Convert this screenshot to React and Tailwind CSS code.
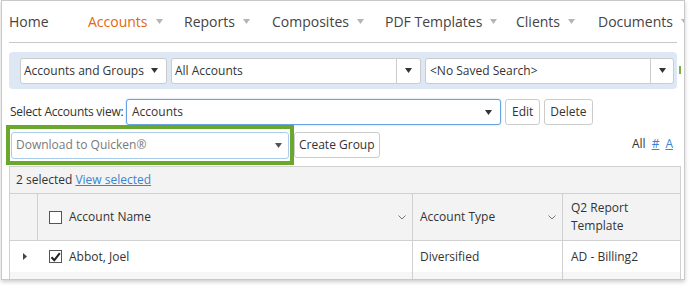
import React from 'react';

const Caret = ({ className = '' }) => (
  <svg width="7" height="5" viewBox="0 0 7 5" className={className}>
    <path d="M0 0h7L3.5 5z" fill="currentColor" />
  </svg>
);

const navItems = [
  { label: 'Home', w: 'w-[79px]' },
  { label: 'Accounts', w: 'w-[96px]', active: true, caret: true },
  { label: 'Reports', w: 'w-[88px]', caret: true },
  { label: 'Composites', w: 'w-[113px]', caret: true },
  { label: 'PDF Templates', w: 'w-[131px]', caret: true },
  { label: 'Clients', w: 'w-[82px]', caret: true },
  { label: 'Documents', w: 'w-[90px]', caret: true },
];

const Check = ({ checked }) => (
  <span className="w-[13px] h-[13px] border border-[#555] bg-white flex items-center justify-center shrink-0">
    {checked && (
      <svg width="11" height="10" viewBox="0 0 11 10">
        <path d="M1.5 5.2l2.8 3L9.8 1.2" stroke="#222" strokeWidth="2" fill="none" />
      </svg>
    )}
  </span>
);

const Chevron = () => (
  <svg width="8" height="5" viewBox="0 0 8 5" className="text-[#777]">
    <path d="M0.5 0.5l3.5 3.5 3.5-3.5" stroke="currentColor" fill="none" />
  </svg>
);

export default function App() {
  return (
    <div className="w-[693px] h-[289px] bg-white overflow-hidden text-[#333] font-['Open_Sans',sans-serif] whitespace-nowrap">
      <div className="ml-px w-[684px] h-[280px] border-x border-t border-b border-[#c9c9c9] shadow-[0_2px_4px_rgba(0,0,0,0.2)] overflow-hidden px-[7px]">
        {/* top nav */}
        <nav className="h-[42px] border-b border-[#c8c8c8] flex items-center text-[14px] pb-px">
          {navItems.map(n => (
            <div key={n.label} className={`${n.w} shrink-0 flex items-center gap-[8px]`}>
              <span className={n.active ? 'text-[#e2680c]' : 'text-[#444]'}>{n.label}</span>
              {n.caret && <Caret className="text-[#b5b5b5] mt-px" />}
            </div>
          ))}
        </nav>

        {/* search band */}
        <div className="mt-[9px] h-[37px] bg-[#dde8f4] rounded-[4px] flex items-center pl-[11px] gap-[4px] text-[12px] relative">
          <div className="w-[147px] h-[26px] bg-white border border-[#ccc] rounded-[3px] flex items-center pl-[3px] pr-[4px] justify-between">
            <span>Accounts and Groups</span>
            <Caret className="text-[#333] mr-[4px]" />
          </div>
          <div className="w-[250px] h-[26px] bg-white border border-[#ccc] rounded-[3px] flex items-center">
            <span className="flex-1 px-[3px]">All Accounts</span>
            <span className="w-[24px] h-full border-l border-[#ccc] flex items-center justify-center"><Caret className="text-[#333]" /></span>
          </div>
          <div className="w-[249px] h-[26px] bg-white border border-[#ccc] rounded-[3px] flex items-center">
            <span className="flex-1 px-[4px]">&lt;No Saved Search&gt;</span>
            <span className="w-[23px] h-full border-l border-[#ccc] flex items-center justify-center"><Caret className="text-[#333]" /></span>
          </div>
          <span className="absolute left-[670px] top-[14px] w-[2px] h-[8px] bg-[#7ab040]" />
        </div>

        {/* view row */}
        <div className="mt-[10px] flex items-center text-[12px] h-[26px]">
          <span className="w-[117px] shrink-0 pl-px tracking-[-0.25px]">Select Accounts view:</span>
          <div className="w-[375px] h-[26px] bg-white border border-[#66a3e0] rounded-[3px] flex items-center justify-between pl-[5px] pr-[8px] shadow-[0_0_2px_rgba(80,150,230,0.5)]">
            <span>Accounts</span>
            <Caret className="text-[#333]" />
          </div>
          <button className="ml-[4px] h-[26px] px-[6px] border border-[#ccc] rounded-[3px] bg-white">Edit</button>
          <button className="ml-[4px] h-[26px] px-[5px] border border-[#ccc] rounded-[3px] bg-white">Delete</button>
        </div>

        {/* action row */}
        <div className="flex items-center h-[40px] text-[12px] -ml-[3px]">
          <div className="w-[288px] h-[40px] border-[4px] border-[#69a82c] flex items-center px-px">
            <div className="w-full h-[27px] border border-[#a9cbec] rounded-[3px] bg-white flex items-center justify-between pl-[4px] pr-[6px]">
              <span className="text-[#7a7a7a]">Download to Quicken®</span>
              <Caret className="text-[#555]" />
            </div>
          </div>
          <button className="h-[26px] px-[4px] border border-[#ccc] rounded-[3px] bg-white">Create Group</button>
          <div className="ml-auto mr-[4px] flex items-center gap-[6px] mt-[-2px]">
            <span>All</span>
            <span className="text-[#3b84d0] underline">#</span>
            <span className="text-[#3b84d0] underline">A</span>
          </div>
        </div>

        {/* grid */}
        <div className="mt-px w-[672px] border-l border-r border-t border-[#d0d0d0] text-[12px] bg-[#f3f3f3]">
          <div className="h-[26px] flex items-center pl-[6px]">
            <span>2 selected&nbsp;</span>
            <span className="text-[#3b84d0] underline">View selected</span>
          </div>
          <div className="h-[48px] flex border-t border-b border-[#d0d0d0]">
            <div className="w-[28px] border-r border-[#d0d0d0]" />
            <div className="w-[375px] border-r border-[#d0d0d0] flex items-center pl-[11px] pr-[6px]">
              <Check />
              <span className="ml-[7px] flex-1">Account Name</span>
              <Chevron />
            </div>
            <div className="w-[150px] border-r border-[#d0d0d0] flex items-center pl-[7px] pr-[6px]">
              <span className="flex-1">Account Type</span>
              <Chevron />
            </div>
            <div className="flex-1 flex items-center pl-[8px] leading-[18px]">
              <span>Q2 Report<br />Template</span>
            </div>
          </div>
          <div className="h-[31px] flex bg-white">
            <div className="w-[28px] flex items-center justify-center pl-[2px]">
              <svg width="4" height="7" viewBox="0 0 4 7"><path d="M0 0l4 3.5L0 7z" fill="#444" /></svg>
            </div>
            <div className="w-[375px] border-r border-[#d0d0d0] flex items-center pl-[11px]">
              <Check checked />
              <span className="ml-[7px]">Abbot, Joel</span>
            </div>
            <div className="w-[150px] border-r border-[#d0d0d0] flex items-center pl-[7px]">Diversified</div>
            <div className="flex-1 flex items-center pl-[8px]">AD - Billing2</div>
          </div>
          <div className="h-[10px] flex bg-[#f6f6f6]">
            <div className="w-[403px] border-r border-[#d0d0d0]" />
            <div className="w-[150px] border-r border-[#d0d0d0]" />
          </div>
        </div>
      </div>
    </div>
  );
}
